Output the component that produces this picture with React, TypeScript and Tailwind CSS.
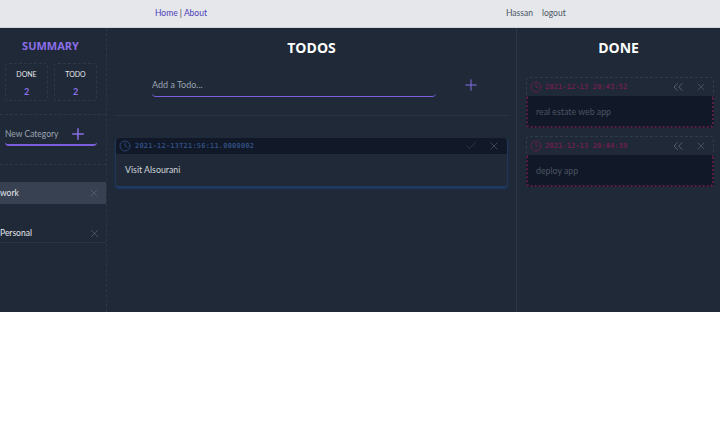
import { Check, ChevronsLeft, Clock, Plus, X } from "lucide-react";

const mono = "font-['DejaVu_Sans_Mono',monospace]";
const heading = "font-['Open_Sans',sans-serif]";

const doneItems = [
  { date: "2021-12-13 20:43:52", text: "real estate web app" },
  { date: "2021-12-13 20:44:39", text: "deploy app" },
];

const SummaryBox = ({ label }: { label: string }) => (
  <div className="w-[43px] h-[38px] rounded border border-dashed border-[#2d3848] flex flex-col items-center pt-[4px]">
    <span className="text-[7px] leading-[12px] text-[#e5e7eb]">{label}</span>
    <span className="text-[9px] leading-[12px] mt-[6px] font-bold text-[#8b6fe8]">2</span>
  </div>
);

export default function App() {
  return (
    <div className="font-['Lato',sans-serif] w-[720px] h-[445px] bg-white overflow-hidden">
      {/* Navbar */}
      <nav className="h-[28px] bg-[#e5e7eb] border-b border-[#d1d5db] flex items-center text-[8.5px]">
        <div className="ml-[155px] w-[351px] text-[#4f3fb8]">
          Home <span className="text-[#374151]">|</span> About
        </div>
        <span className="text-[#4b5563]">Hassan</span>
        <span className="ml-[9px] text-[#4b5563]">logout</span>
      </nav>

      <main className="h-[284px] bg-[#1f2937] flex">
        {/* Sidebar */}
        <aside className="w-[107px] shrink-0 border-r border-dashed border-[#2b3646]">
          <h2 className={`${heading} h-[35px] pt-[10px] pr-[5px] text-center text-[11px] leading-[15px] font-bold text-[#8b6fe8]`}>SUMMARY</h2>
          <div className="h-[51px] flex gap-[6px] pl-[5px]">
            <SummaryBox label="DONE" />
            <SummaryBox label="TODO" />
          </div>
          <div className="h-[50px] border-t border-dashed border-[#2d3848] px-[5px] pt-[9px]">
            <div className="h-[22px] w-[92px] flex items-center justify-between pr-[10px] border-b-2 border-[#7c5fdc] rounded-b">
              <span className="text-[8.5px] text-[#9ca3af]">New Category</span>
              <Plus size={18} strokeWidth={2} className="text-[#8b6fe8]" />
            </div>
          </div>
          <div className="h-[18px] border-t border-dashed border-[#2d3848]" />
          <div className="h-[22px] bg-[#374151] flex items-center justify-between pr-[6px]">
            <span className="text-[8.5px] text-[#e5e7eb]">work</span>
            <X size={12} strokeWidth={1} className="text-[#6b7280]" />
          </div>
          <div className="h-[39px] pt-[20px] border-b border-[#2a3443] flex items-center justify-between pr-[5px]">
            <span className="text-[8.5px] text-[#e5e7eb]">Personal</span>
            <X size={13} strokeWidth={1} className="text-[#6b7280]" />
          </div>
        </aside>

        {/* Todos */}
        <section className="w-[410px] shrink-0 border-r border-[#2b3646] px-[8px]">
          <h1 className={`${heading} pt-[10px] text-center text-[14px] leading-[19px] font-bold text-white`}>TODOS</h1>
          <div className="h-[58px] flex items-start pl-[37px] pt-[20px]">
            <div className="w-[284px] h-[20px] border-b border-[#7c5fdc] rounded-b text-[9px] leading-[15px] text-[#9ca3af]">
              Add a Todo...
            </div>
            <Plus size={18} strokeWidth={1.3} className="ml-[26px] -mt-[1px] text-[#8b6fe8]" />
          </div>
          <div className="h-[23px] border-t border-[#2a3443]" />
          <div className="w-[393px] h-[50px] rounded border-b-2 border-[#203a66] border-x border-x-[#233554] shadow-[0_1px_2px_#1e3a5f]">
            <div className="h-[16px] bg-[#111827] rounded-t flex items-center pl-[3px] pr-[7px]">
              <Clock size={12} strokeWidth={1.7} className="text-[#2f4d7f]" />
              <span className={`${mono} ml-[4px] flex-1 text-[7px] font-bold tracking-[0.2px] text-[#2f4d7f]`}>
                2021-12-13T21:56:11.0000002
              </span>
              <Check size={12} strokeWidth={1} className="text-[#4b5563]" />
              <X size={12} strokeWidth={1} className="ml-[11px] text-[#6b7280]" />
            </div>
            <div className="pl-[9px] pt-[10px] text-[8.8px] leading-[12px] text-[#d1d5db]">Visit Alsourani</div>
          </div>
        </section>

        {/* Done */}
        <section className="flex-1 pl-[9px] pr-[6px]">
          <h1 className={`${heading} pt-[10px] text-center text-[14px] leading-[19px] pr-[3px] font-bold text-white`}>DONE</h1>
          <div className="pt-[20px] flex flex-col gap-[8px]">
            {doneItems.map((item) => (
              <div key={item.date} className="h-[51px] flex flex-col">
                <div className="h-[19px] rounded-t border border-b-0 border-dashed border-[#2f3a4c] flex items-center pl-[3px] pr-[6px]">
                  <Clock size={12} strokeWidth={1.8} className="text-[#6b1f4e]" />
                  <span className={`${mono} ml-[3px] flex-1 text-[7.2px] font-bold text-[#6b1f4e]`}>{item.date}</span>
                  <ChevronsLeft size={16} strokeWidth={1.1} className="text-[#6b7280]" />
                  <X size={12} strokeWidth={1} className="ml-[9px] text-[#6b7280]" />
                </div>
                <div className="flex-1 bg-[#111827] rounded-b border-2 border-t-0 border-dotted border-[#5a1f48] pl-[8px] pt-[10px] text-[8.8px] leading-[12px] text-[#4b5563]">
                  {item.text}
                </div>
              </div>
            ))}
          </div>
        </section>
      </main>
    </div>
  );
}
